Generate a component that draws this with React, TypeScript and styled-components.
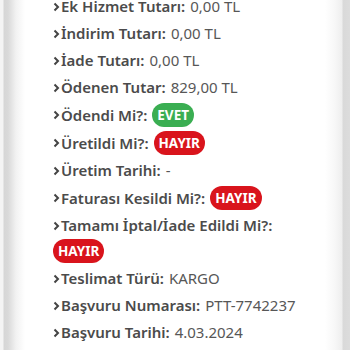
import React from 'react';
import styled, { createGlobalStyle } from 'styled-components';

const GlobalStyle = createGlobalStyle`
    html, body {
        margin: 0;
        padding: 0;
        background: #ffffff;
        overflow: hidden;
    }
    body {
        font-family: 'Noto Sans', 'Open Sans', sans-serif;
    }
`;

type Status = 'yes' | 'no';

interface Detail {
    label: string;
    value?: string;
    status?: Status;
}

const details: Detail[] = [
    { label: 'Ek Hizmet Tutarı:', value: '0,00 TL' },
    { label: 'İndirim Tutarı:', value: '0,00 TL' },
    { label: 'İade Tutarı:', value: '0,00 TL' },
    { label: 'Ödenen Tutar:', value: '829,00 TL' },
    { label: 'Ödendi Mi?:', status: 'yes' },
    { label: 'Üretildi Mi?:', status: 'no' },
    { label: 'Üretim Tarihi:', value: '-' },
    { label: 'Faturası Kesildi Mi?:', status: 'no' },
    { label: 'Tamamı İptal/İade Edildi Mi?:', status: 'no' },
    { label: 'Teslimat Türü:', value: 'KARGO' },
    { label: 'Başvuru Numarası:', value: 'PTT-7742237' },
    { label: 'Başvuru Tarihi:', value: '4.03.2024' },
];

const Page = styled.div`
    display: flex;
    width: 350px;
    height: 350px;
    overflow: hidden;
`;

const EdgeLeft = styled.div`
    flex: 0 0 25px;
    background: linear-gradient(
        to right,
        #f4f4f4 0px,
        #f4f4f4 3px,
        #d6d6d6 4px,
        #d9d9d9 8px,
        #f2f2f2 16px,
        #ffffff 25px
    );
`;

const EdgeRight = styled.div`
    flex: 0 0 25px;
    background: linear-gradient(
        to right,
        #ffffff 0px,
        #f7f7f7 10px,
        #eeeeee 17px,
        #d9d9d9 18px,
        #dcdcdc 25px
    );
`;

const Card = styled.div`
    flex: 1;
    background: #ffffff;
    padding: 0 0 0 28px;
`;

const List = styled.ul`
    list-style: none;
    margin: -6px 0 0;
    padding: 0;
`;

const Row = styled.li`
    display: flex;
    flex-wrap: wrap;
    align-items: center;
    column-gap: 5px;
    min-height: 25px;
    margin-bottom: 2px;
    font-size: 15px;
    line-height: 25px;
`;

const Term = styled.span`
    display: inline-flex;
    align-items: center;
    white-space: nowrap;
    font-weight: 600;
    color: #4b4b4b;
`;

const Chevron = styled.svg`
    width: 7px;
    height: 10px;
    margin-right: 1px;
`;

const Value = styled.span`
    font-weight: 400;
    color: #575757;
`;

const Badge = styled.span<{ $status: Status }>`
    display: inline-block;
    height: 24px;
    line-height: 24px;
    margin: 1px 0;
    padding: 0 5px;
    border-radius: 12px;
    font-size: 13.5px;
    font-weight: 700;
    color: #ffffff;
    background: ${({ $status }) => ($status === 'yes' ? '#3aae52' : '#d9141c')};
`;

const ChevronIcon = () => (
    <Chevron viewBox='0 0 7 10'>
        <polyline points='1.5,1.5 5,5 1.5,8.5' fill='none' stroke='#444' strokeWidth='2' />
    </Chevron>
);

const App = () => (
    <>
        <GlobalStyle />
        <Page>
            <EdgeLeft />
            <Card>
                <List>
                    {details.map((d) => (
                        <Row key={d.label}>
                            <Term>
                                <ChevronIcon />
                                {d.label}
                            </Term>
                            {d.status ? (
                                <Badge $status={d.status}>{d.status === 'yes' ? 'EVET' : 'HAYIR'}</Badge>
                            ) : (
                                <Value>{d.value}</Value>
                            )}
                        </Row>
                    ))}
                </List>
            </Card>
            <EdgeRight />
        </Page>
    </>
);

export default App;
